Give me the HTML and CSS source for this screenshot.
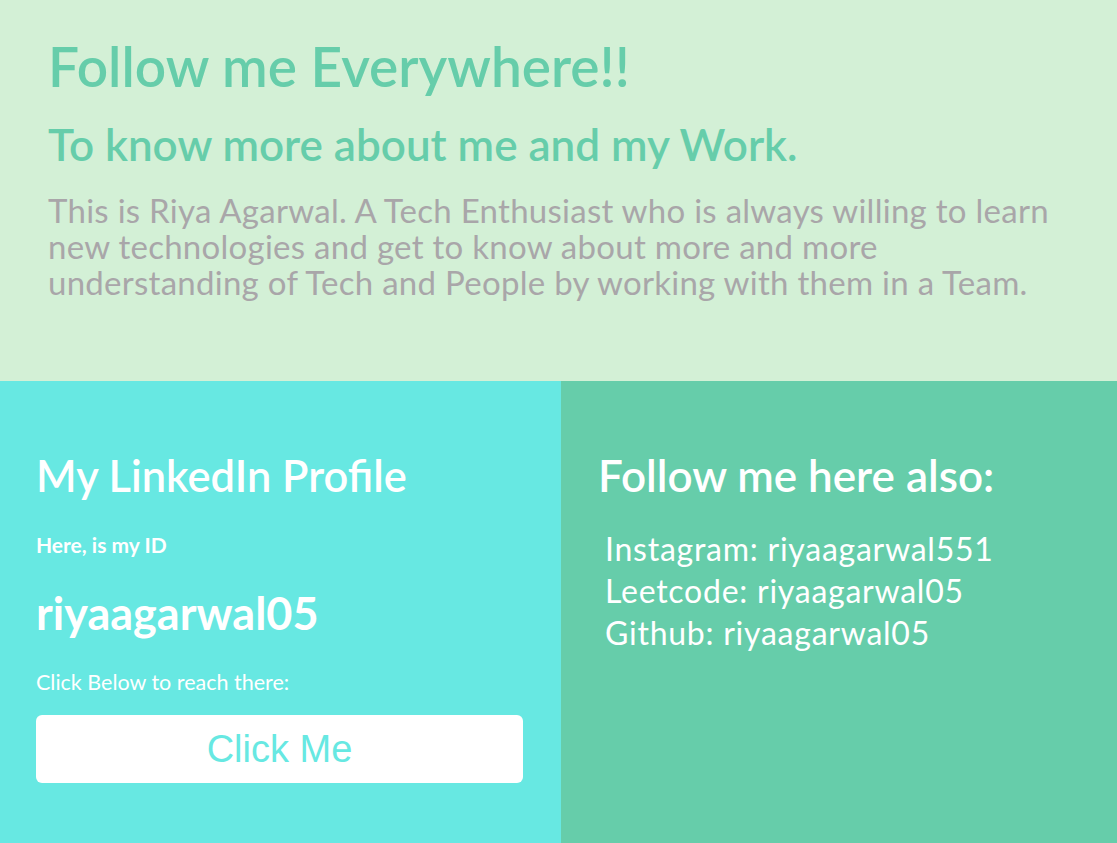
FILE: index.html
```html
<!DOCTYPE html>
<html lang="en">
<head>
<meta charset="utf-8">
<title>Follow me Everywhere</title>
<link rel="stylesheet" href="styles.css">
</head>
<body>
<section class="hero">
  <h1 class="hero-title">Follow me Everywhere!!</h1>
  <h2 class="hero-subtitle">To know more about me and my Work.</h2>
  <p class="hero-text">This is Riya Agarwal. A Tech Enthusiast who is always willing to learn new technologies and get to know about more and more understanding of Tech and People by working with them in a Team.</p>
</section>
<section class="contact">
  <div class="linkedin">
    <h2 class="panel-title">My LinkedIn Profile</h2>
    <h4 class="id-label">Here, is my ID</h4>
    <h2 class="id-value">riyaagarwal05</h2>
    <p class="hint">Click Below to reach there:</p>
    <button class="cta">Click Me</button>
  </div>
  <div class="others">
    <h2 class="panel-title">Follow me here also:</h2>
    <ul class="links">
      <li>Instagram: riyaagarwal551</li>
      <li>Leetcode: riyaagarwal05</li>
      <li>Github: riyaagarwal05</li>
    </ul>
  </div>
</section>
</body>
</html>
```
FILE: styles.css
```css
html, body {
  margin: 0;
  padding: 0;
}
body {
  font-family: Lato, "Open Sans", sans-serif;
  width: 1117px;
  height: 843px;
  overflow: hidden;
}
.hero {
  box-sizing: border-box;
  height: 381px;
  background: #d3f0d6;
  padding: 36px 48px 0 48px;
}
.hero-title {
  margin: 0;
  font-size: 55px;
  font-weight: 600;
  line-height: 60px;
  color: #66cdaa;
}
.hero-subtitle {
  margin: 23px 0 0 0;
  font-size: 44px;
  font-weight: 600;
  line-height: 50px;
  color: #66cdaa;
}
.hero-text {
  margin: 23px 0 0 0;
  font-size: 33px;
  letter-spacing: 0.27px;
  line-height: 36px;
  color: #a9a6a9;
  width: 1022px;
}
.contact {
  display: grid;
  grid-template-columns: 561px 1fr;
  height: 462px;
}
.linkedin {
  background: #67e8e2;
  padding: 69px 38px 0 36px;
  color: #fff;
}
.others {
  background: #66cdaa;
  padding: 69px 36px 0 37px;
  color: #fff;
}
.panel-title {
  margin: 0;
  font-size: 44px;
  font-weight: 600;
  line-height: 50px;
}
.linkedin .panel-title {
  font-size: 43.4px;
}
.id-label {
  margin: 33px 0 0 0;
  font-size: 21px;
  font-weight: 700;
  line-height: 24px;
}
.id-value {
  margin: 31px 0 0 0;
  font-size: 45px;
  font-weight: 700;
  line-height: 50px;
}
.hint {
  margin: 32px 0 0 0;
  font-size: 21.5px;
  line-height: 24px;
}
.cta {
  display: block;
  margin-top: 21px;
  width: 487px;
  height: 68px;
  border: none;
  border-radius: 6px;
  background: #fff;
  color: #67e8e2;
  font-family: "Liberation Sans", Arial, sans-serif;
  font-size: 38px;
}
.links {
  list-style: none;
  margin: 28px 0 0 0;
  padding: 0 0 0 7px;
  font-size: 32px;
  letter-spacing: 0.75px;
  line-height: 42px;
}
```
